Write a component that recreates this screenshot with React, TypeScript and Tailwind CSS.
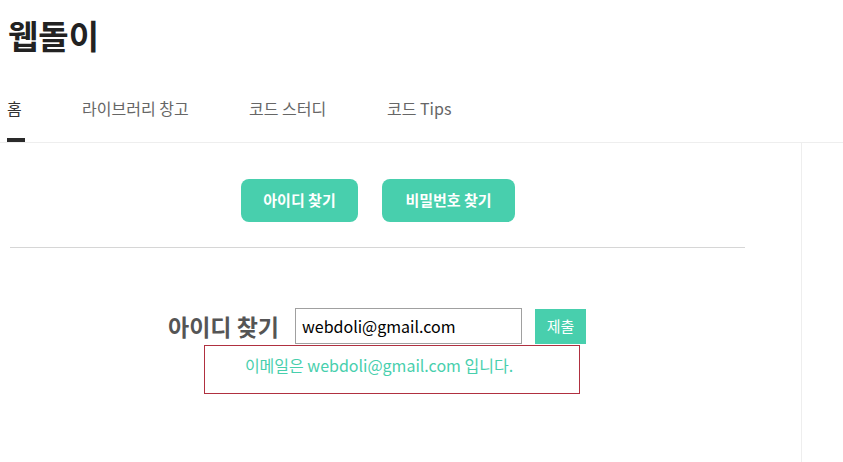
import { useState } from "react";

const TABS = [
  { label: "홈", w: "w-[75px]" },
  { label: "라이브러리 창고", w: "w-[167px]" },
  { label: "코드 스터디", w: "w-[138px]" },
  { label: "코드 Tips", w: "w-[100px]" },
];

export default function App() {
  const [email, setEmail] = useState("webdoli@gmail.com");

  return (
    <div
      className="min-h-[462px] bg-white text-[#222] overflow-hidden"
      style={{ fontFamily: '"Noto Sans CJK KR", "Noto Sans", sans-serif' }}
    >
      {/* Header */}
      <header className="border-b border-[#eeeeee]">
        <h1 className="pl-[8px] pt-[12px] text-[33px] font-bold leading-[46px] text-[#222]">
          웹돌이
        </h1>
        <nav className="mt-[38px] flex pl-[7px]">
          {TABS.map((t, i) => (
            <div key={t.label} className={"flex flex-col items-start " + t.w}>
              <span
                className={
                  "text-[16px] leading-[24px] " +
                  (i === 0 ? "text-[#333]" : "text-[#666]")
                }
              >
                {t.label}
              </span>
              <span
                className={
                  "mt-[18px] h-[4px] w-[18px] " + (i === 0 ? "bg-[#2a2a2a]" : "bg-transparent")
                }
              />
            </div>
          ))}
        </nav>
      </header>

      {/* Body */}
      <div className="flex">
        <main className="w-[802px] min-h-[320px] border-r border-[#eeeeee] pt-[36px]">
          <div className="flex justify-center gap-[24px] pr-[45px]">
            <button className="h-[43px] w-[117px] rounded-[8px] bg-[#48cfad] text-[15px] font-bold text-white">
              아이디 찾기
            </button>
            <button className="h-[43px] w-[133px] rounded-[8px] bg-[#48cfad] text-[15px] font-bold text-white">
              비밀번호 찾기
            </button>
          </div>

          <hr className="mt-[25px] ml-[10px] w-[735px] border-0 border-t border-[#d6d6d6]" />

          <div className="mt-[60px] flex items-center pl-[168px]">
            <span className="text-[23px] font-bold leading-[30px] text-[#555]">
              아이디 찾기
            </span>
            <input
              value={email}
              onChange={(e) => setEmail(e.target.value)}
              className="ml-[16px] h-[36px] w-[227px] border border-[#a0a0a0] px-[6px] text-[16px] text-black outline-none"
            />
            <button className="ml-[13px] h-[35px] w-[51px] bg-[#48cfad] text-[15px] text-white">
              제출
            </button>
          </div>

          <div className="ml-[204px] mt-[1px] h-[49px] w-[376px] border border-[#b03040] pt-[7px] pr-[26px] text-center text-[16px] leading-[24px] text-[#48cfad]">
            이메일은 {email} 입니다.
          </div>
        </main>
        <div className="flex-1" />
      </div>
    </div>
  );
}
